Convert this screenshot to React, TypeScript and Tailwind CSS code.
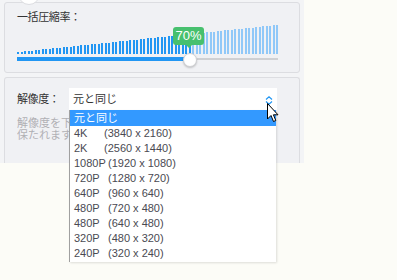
const bars = Array.from({ length: 75 }, (_, i) => 2 + Math.round((27 * i) / 74));

const resolutions = [
  { name: "4K", size: "(3840 x 2160)", w: "w-[30px]" },
  { name: "2K", size: "(2560 x 1440)", w: "w-[30px]" },
  { name: "1080P", size: "(1920 x 1080)", w: "w-[34px]" },
  { name: "720P", size: "(1280 x 720)", w: "w-[34px]" },
  { name: "640P", size: "(960 x 640)", w: "w-[34px]" },
  { name: "480P", size: "(720 x 480)", w: "w-[34px]" },
  { name: "480P", size: "(640 x 480)", w: "w-[34px]" },
  { name: "320P", size: "(480 x 320)", w: "w-[34px]" },
  { name: "240P", size: "(320 x 240)", w: "w-[34px]" },
];

const THUMB = 173;

export default function App() {
  return (
    <div className="relative w-[397px] h-[280px] overflow-hidden bg-[#fcfcf7] font-['Liberation_Sans','Noto_Sans_CJK_JP',sans-serif] text-[#333]">
      <div className="w-[304px] h-[163px] bg-[#f3f4f6] px-[4px] pt-[2px] flex flex-col gap-[4px]">
        {/* compression panel */}
        <div className="relative h-[71px] rounded-[3px] border border-[#dcdde1] bg-[#f0f1f4] px-[12px] pt-[7px]">
          <div className="absolute left-[13px] top-[-20px] w-[22px] h-[22px] rounded-full bg-white border border-[#dcdde1]" />
          <p className="relative text-[11px] leading-[14px] tracking-[-0.4px]">一括圧縮率：</p>

          <div className="relative w-[261px] mt-[1px]">
            <div className="flex items-end justify-between h-[29px]">
              {bars.map((h, i) => (
                <span
                  key={i}
                  className={i * 3.5 < THUMB ? "w-[2px] bg-[#2196f3]" : "w-[2px] bg-[#90c8f8]"}
                  style={{ height: h }}
                />
              ))}
            </div>
            <div className="flex items-center h-[4px] mt-[3px]">
              <div className="h-[4px] bg-[#2196f3]" style={{ width: THUMB }} />
              <div className="flex-1 h-[2px] bg-[#cfd0d3]" />
            </div>

            {/* tooltip */}
            <div className="absolute left-[156px] top-[2px] flex flex-col items-center">
              <div className="w-[31px] h-[18px] rounded-[3px] bg-[#47c06e] text-white text-[13px] leading-[18px] text-center">
                70%
              </div>
              <div className="w-0 h-0 border-l-[3px] border-r-[3px] border-t-[3px] border-l-transparent border-r-transparent border-t-[#47c06e]" />
            </div>

            {/* thumb */}
            <div className="absolute left-[166px] top-[28px] w-[14px] h-[14px] rounded-full bg-white border border-[#cfd0d3] shadow-[0_1px_2px_rgba(0,0,0,0.2)]" />
          </div>
        </div>

        {/* resolution panel */}
        <div className="flex-1 rounded-t-[3px] border border-b-0 border-[#dcdde1] bg-[#f0f1f4] px-[12px] pt-[10px]">
          <div className="flex items-center">
            <span className="w-[52px] text-[11px] leading-[14px] tracking-[-0.4px]">解像度：</span>
            <div className="relative w-[208px] h-[22px] bg-white flex items-center pl-[4px] text-[11px]">
              <span>元と同じ</span>
              <svg className="absolute left-[196px] top-[8px]" width="8" height="9" viewBox="0 0 8 9" fill="none" stroke="#2196f3" strokeWidth="1.2">
                <path d="M1 3.5 L4 0.8 L7 3.5" />
                <path d="M1 5.5 L4 8.2 L7 5.5" />
              </svg>

              {/* dropdown list */}
              <div className="absolute left-0 top-[22px] z-10 w-[207px] bg-white border-l border-[#a0a0a0] shadow-[1px_1px_2px_rgba(0,0,0,0.12)] pb-[1px] text-[11px]">
                <div className="h-[16px] bg-[#3399ff] text-white pl-[4px] leading-[16px]">元と同じ</div>
                {resolutions.map((r, i) => (
                  <div key={i} className="flex h-[15px] items-center pl-[4px] text-[#4a4a52]">
                    <span className={r.w}>{r.name}</span>
                    <span>{r.size}</span>
                  </div>
                ))}
              </div>
            </div>
          </div>
          <p className="mt-[7px] w-[52px] overflow-hidden whitespace-nowrap text-[11px] leading-[12px] text-[#b0b0b4]">
            解像度を下げ
            <br />
            保たれます。
          </p>
        </div>
      </div>

      {/* mouse cursor */}
      <svg className="absolute left-[267px] top-[103px] z-20" width="12" height="20" viewBox="0 0 12 20">
        <path d="M0.5 0.5 L0.5 16 L4 12.5 L6.5 18.5 L8.8 17.5 L6.4 11.8 L11 11.8 Z" fill="#fff" stroke="#000" strokeWidth="1" strokeLinejoin="round" />
      </svg>
    </div>
  );
}
